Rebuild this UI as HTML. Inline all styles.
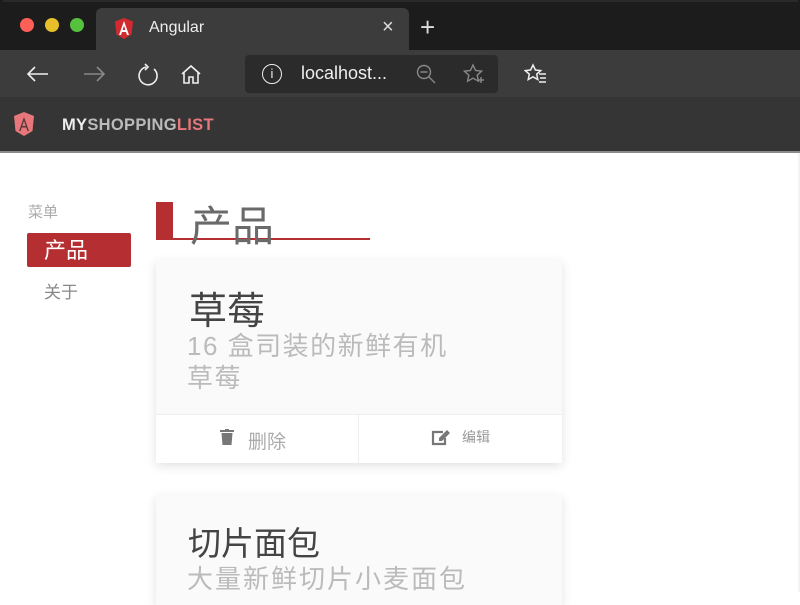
<!DOCTYPE html>
<html><head><meta charset="utf-8"><style>
*{margin:0;padding:0;box-sizing:border-box}
body{width:800px;height:592px;overflow:hidden;background:#fff;font-family:"Liberation Sans","Noto Sans CJK SC",sans-serif;position:relative}
.abs{position:absolute}
.cjk{font-family:"Liberation Sans","Noto Sans CJK SC",sans-serif}
</style></head><body>
<div class="abs" style="left:0;top:0;width:800px;height:50px;background:#1c1c1c"></div>
<div class="abs" style="left:3px;top:0;width:795px;height:2px;background:#2a2a2a"></div>
<div class="abs" style="left:20px;top:18px;width:14px;height:14px;border-radius:50%;background:#fe5f57"></div>
<div class="abs" style="left:45px;top:18px;width:14px;height:14px;border-radius:50%;background:#e6bf2b"></div>
<div class="abs" style="left:70px;top:18px;width:14px;height:14px;border-radius:50%;background:#56c13c"></div>
<div class="abs" style="left:96px;top:8px;width:313px;height:42px;background:#3c3c3c;border-radius:6px 6px 0 0"></div>
<svg class="abs" style="left:114px;top:18px" width="20" height="22" viewBox="0 0 20 22"><path d="M10 0L19 3.5L17.5 16.5L10 21L2.5 16.5L1 3.5Z" fill="#d22a2f"/><path d="M10 3L5 17h2l1-3h4l1 3h2zM8.6 12L10 7.5 11.4 12z" fill="#fff"/></svg>
<div class="abs" style="left:149px;top:19px;color:#eee;font-size:16px">Angular</div>
<div class="abs" style="left:382px;top:16px;color:#ddd;font-size:20px">×</div>
<div class="abs" style="left:420px;top:12px;color:#ddd;font-size:26px;font-weight:300">+</div>
<div class="abs" style="left:0;top:50px;width:800px;height:47px;background:#3c3c3c"></div>
<svg class="abs" style="left:24px;top:62px" width="180" height="26" viewBox="0 0 180 26" fill="none" stroke-width="1.6">
<path d="M4 12h20M11 5l-7 7 7 7" stroke="#eee"/>
<path d="M60 12h20M73 5l7 7-7 7" stroke="#888"/>
<path d="M122 5a9 9 0 1 0 8 2" stroke="#eee"/><path d="M121 2l3 3-3 3" stroke="#eee"/>
<path d="M176 12l-9-8-9 8M160 10v11h5v-6h4v6h5V10" stroke="#eee"/>
</svg>
<div class="abs" style="left:245px;top:55px;width:253px;height:38px;background:#2b2b2b;border-radius:4px"></div>
<div class="abs" style="left:262px;top:64px;width:20px;height:20px;border:1.5px solid #eee;border-radius:50%;color:#eee;font-size:13px;text-align:center;line-height:17px">i</div>
<div class="abs" style="left:301px;top:63px;color:#eee;font-size:18px">localhost...</div>
<svg class="abs" style="left:414px;top:62px" width="80" height="26" viewBox="0 0 80 26" fill="none" stroke="#888" stroke-width="1.4"><circle cx="10" cy="10" r="6.5"/><path d="M6.5 10h7M15 15l6 6"/><path d="M59 3l2.6 5.5 6 .7-4.4 4 1.2 6-5.4-3-5.4 3 1.2-6-4.4-4 6-.7z"/><path d="M64 18h6M67 15v6"/></svg>
<svg class="abs" style="left:524px;top:62px" width="26" height="26" viewBox="0 0 26 26" fill="none" stroke="#eee" stroke-width="1.5"><path d="M9 3l2.4 5 5.3.6-4 3.6 1.1 5.3-4.8-2.7-4.8 2.7 1.1-5.3-4-3.6 5.3-.6z"/><path d="M15 12h7M16 16h6M15 20h7"/></svg>
<div class="abs" style="left:0;top:97px;width:800px;height:54px;background:#353535"></div>
<div class="abs" style="left:0;top:151px;width:800px;height:2px;background:#8a8a8a"></div>
<svg class="abs" style="left:13px;top:112px" width="22" height="25" viewBox="0 0 22 25"><path d="M11 0L21 4L19.5 19L11 24L2.5 19L1 4Z" fill="#e8777b"/><path d="M11 5L6 19h1.6l1.2-3.5h4.4L14.4 19H16zM9.3 14L11 9l1.7 5z" fill="#5a3a3a"/></svg>
<div class="abs" style="left:62px;top:116px;font-size:16.5px;font-weight:bold;letter-spacing:0.3px"><span style="color:#eee">MY</span><span style="color:#bbb">SHOPPING</span><span style="color:#e8777b">LIST</span></div>
<div class="abs" style="left:798px;top:153px;width:2px;height:439px;background:#f3f3f3"></div>

<div class="abs cjk" style="left:28px;top:201px;font-size:15px;color:#aaa">菜单</div>
<div class="abs" style="left:27px;top:233px;width:104px;height:34px;background:#b52e31;border-radius:2px"></div>
<div class="abs cjk" style="left:44px;top:238px;font-size:22px;color:#fff;line-height:26px">产品</div>
<div class="abs cjk" style="left:44px;top:278px;font-size:17px;color:#888">关于</div>

<div class="abs" style="left:156px;top:202px;width:17px;height:38px;background:#b52e31"></div>
<div class="abs" style="left:156px;top:238px;width:214px;height:2px;background:#b52e31"></div>
<div class="abs cjk" style="left:190px;top:202px;font-size:42px;color:#6a6a6a;line-height:50px">产品</div>

<div class="abs" style="left:156px;top:260px;width:406px;height:203px;background:#fafafa;box-shadow:0 3px 10px rgba(0,0,0,.12)"></div>
<div class="abs cjk" style="left:189px;top:290px;font-size:38px;color:#444;line-height:44px">草莓</div>
<div class="abs cjk" style="left:187px;top:330px;width:275px;font-size:26px;letter-spacing:1.5px;color:#bbb;line-height:32px">16 盒司装的新鲜有机草莓</div>
<div class="abs" style="left:156px;top:414px;width:406px;height:49px;background:#fff;border-top:1px solid #eee"></div>
<div class="abs" style="left:358px;top:414px;width:1px;height:49px;background:#eee"></div>
<svg class="abs" style="left:220px;top:429px" width="14" height="16" viewBox="0 0 14 16"><rect x="0" y="1" width="14" height="2" fill="#777"/><rect x="5" y="0" width="4" height="2" fill="#777"/><path d="M1.5 4h11l-1 12h-9z" fill="#777"/></svg>
<div class="abs cjk" style="left:248px;top:427px;font-size:19px;color:#aaa">删除</div>
<svg class="abs" style="left:431px;top:429px" width="20" height="17" viewBox="0 0 20 17"><path d="M12 3H2v12h12V9" fill="none" stroke="#777" stroke-width="2.2"/><path d="M16 1l3 3-8 8H8V9z" fill="#777"/></svg>
<div class="abs cjk" style="left:462px;top:427px;font-size:14px;color:#999">编辑</div>

<div class="abs" style="left:156px;top:495px;width:406px;height:110px;background:#fafafa;box-shadow:0 3px 10px rgba(0,0,0,.12)"></div>
<div class="abs cjk" style="left:188px;top:524px;font-size:33px;color:#444;line-height:40px">切片面包</div>
<div class="abs cjk" style="left:187px;top:563px;font-size:26px;letter-spacing:2px;color:#bbb;line-height:32px;white-space:nowrap">大量新鲜切片小麦面包</div>
</body></html>
